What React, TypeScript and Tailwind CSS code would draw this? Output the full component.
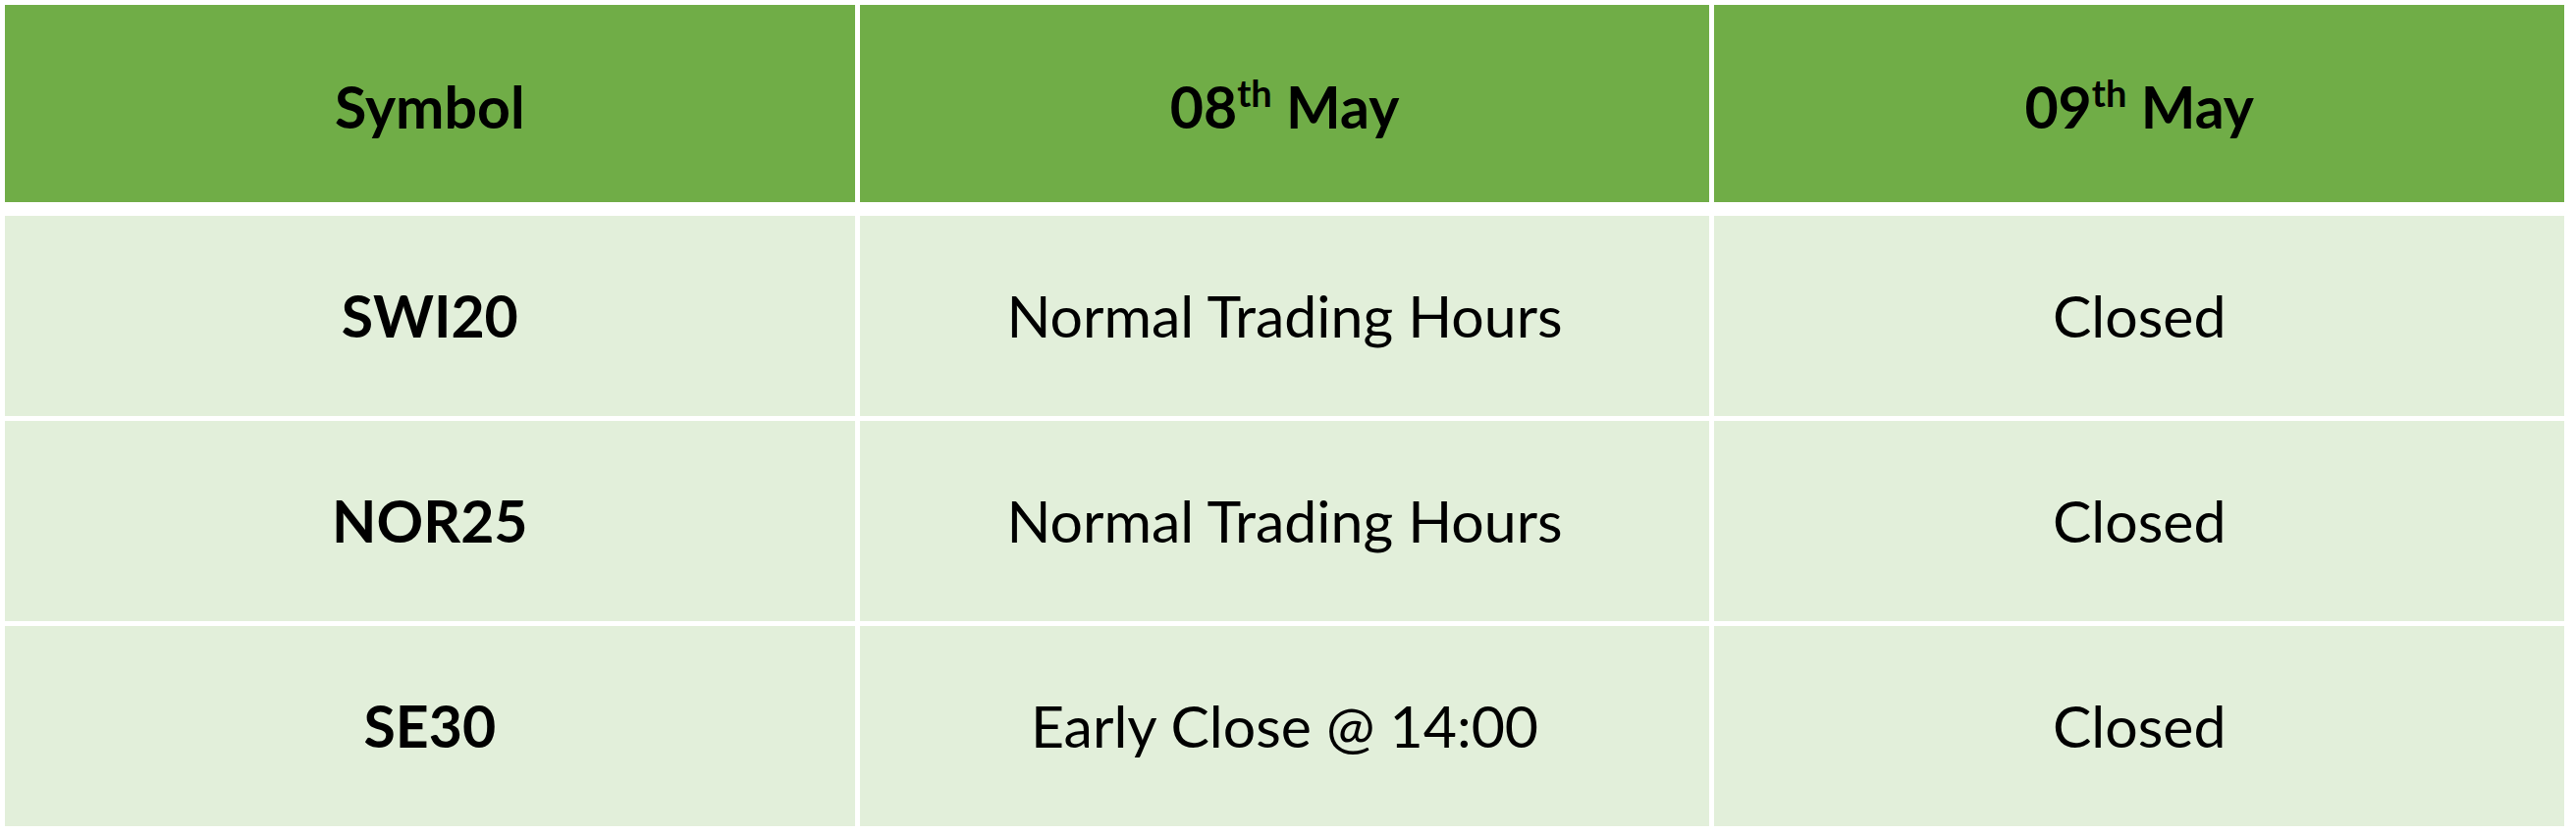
const rows = [
  { symbol: 'SWI20', may8: 'Normal Trading Hours', may9: 'Closed' },
  { symbol: 'NOR25', may8: 'Normal Trading Hours', may9: 'Closed' },
  { symbol: 'SE30', may8: 'Early Close @ 14:00', may9: 'Closed' },
]

function DateHead({ day }: { day: string }) {
  return (
    <span>
      {day}
      <sup className="relative top-[-2px] align-super text-[38px]">th</sup> May
    </span>
  )
}

export default function App() {
  return (
    <div className="min-h-screen bg-white pl-[5px] pt-[5px] text-black [font-family:Lato,'Liberation_Sans',sans-serif]">
      <div className="w-[2607px]">
        {/* header */}
        <div className="grid h-[201px] grid-cols-3 gap-x-[5px] text-[59px] font-bold">
          <div className="flex items-center justify-center bg-[#70ad47] pt-[8px]">Symbol</div>
          <div className="flex items-center justify-center bg-[#70ad47] pt-[8px]">
            <DateHead day="08" />
          </div>
          <div className="flex items-center justify-center bg-[#70ad47] pt-[8px]">
            <DateHead day="09" />
          </div>
        </div>

        {/* body */}
        <div className="mt-[14px] flex flex-col gap-y-[5px] text-[59px]">
          {rows.map((r) => (
            <div key={r.symbol} className="grid h-[204px] grid-cols-3 gap-x-[5px]">
              <div className="flex items-center justify-center bg-[#e2efda] font-bold">{r.symbol}</div>
              <div className="flex items-center justify-center bg-[#e2efda]">{r.may8}</div>
              <div className="flex items-center justify-center bg-[#e2efda]">{r.may9}</div>
            </div>
          ))}
        </div>
      </div>
    </div>
  )
}
